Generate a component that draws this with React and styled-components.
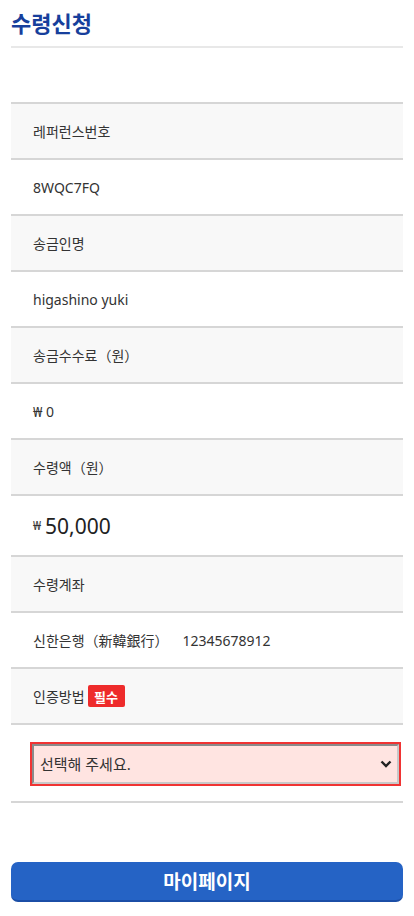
import styled, { createGlobalStyle } from "styled-components";

const GlobalStyle = createGlobalStyle`
  body {
    margin: 0;
    background: #fff;
    font-family: "Noto Sans", "Noto Sans CJK KR", sans-serif;
    color: #333;
  }
`;

const Page = styled.div`
  padding: 0 11px;
`;

const Title = styled.h1`
  margin: 0;
  padding-top: 8px;
  height: 38px;
  font-size: 22px;
  font-weight: 700;
  line-height: 30px;
  color: #173f9c;
  border-bottom: 2px solid #e8e8e8;
  box-sizing: content-box;
`;

const Table = styled.div`
  margin-top: 54px;
  border-top: 2px solid #d6d6d6;
`;

const Row = styled.div`
  display: flex;
  align-items: center;
  height: ${(p) => p.h || 54}px;
  padding-left: 22px;
  background: ${(p) => (p.head ? "#f8f8f8" : "#fff")};
  border-bottom: 2px solid #d6d6d6;
  font-size: 14px;
`;

const Big = styled.span`
  font-size: 21px;
  font-weight: 400;
  color: #222;
`;

const Won = styled.span`
  font-size: 12px;
  margin-right: 4px;
`;

const Gap = styled.span`
  display: inline-block;
  width: 14px;
`;

const Badge = styled.span`
  display: inline-flex;
  align-items: center;
  justify-content: center;
  margin-left: 3px;
  width: 37px;
  height: 22px;
  border-radius: 2px;
  background: #ee2b2b;
  color: #fff;
  font-size: 13px;
  font-weight: 700;
`;

const SelectCell = styled.div`
  padding: 17px 2px 15px 19px;
  border-bottom: 2px solid #d6d6d6;
`;

const SelectFrame = styled.div`
  position: relative;
  border: 2px solid #f03333;
  height: 40px;
`;

const Select = styled.select`
  appearance: none;
  width: 100%;
  height: 100%;
  box-sizing: border-box;
  border: 2px solid;
  border-color: #8a8a8a #c8c8c8 #c8c8c8 #8a8a8a;
  background: #ffe4e1;
  padding: 0 28px 0 6px;
  font-family: inherit;
  font-size: 15px;
  color: #333;
  outline: none;
`;

const Chevron = styled.svg`
  position: absolute;
  right: 7px;
  top: 50%;
  transform: translateY(-50%);
  pointer-events: none;
`;

const Button = styled.button`
  display: block;
  width: 100%;
  height: 40px;
  margin-top: 59px;
  border: none;
  border-bottom: 2px solid #1b4ea6;
  border-radius: 7px;
  background: #2563c5;
  color: #fff;
  font-family: inherit;
  font-size: 19px;
  font-weight: 700;
  cursor: pointer;
`;

export default function App() {
  return (
    <Page>
      <GlobalStyle />
      <Title>수령신청</Title>
      <Table>
        <Row head>레퍼런스번호</Row>
        <Row>8WQC7FQ</Row>
        <Row head>송금인명</Row>
        <Row>higashino yuki</Row>
        <Row head>송금수수료（원）</Row>
        <Row>₩ 0</Row>
        <Row head>수령액（원）</Row>
        <Row h={59}>
          <Won>₩</Won>
          <Big>50,000</Big>
        </Row>
        <Row head>수령계좌</Row>
        <Row>
          신한은행（新韓銀行）<Gap />12345678912
        </Row>
        <Row head>
          인증방법<Badge>필수</Badge>
        </Row>
        <SelectCell>
          <SelectFrame>
            <Select defaultValue="">
              <option value="">선택해 주세요.</option>
            </Select>
            <Chevron width="12" height="8" viewBox="0 0 12 8">
              <path d="M1.5 1.5 6 6l4.5-4.5" fill="none" stroke="#222" strokeWidth="2.4" />
            </Chevron>
          </SelectFrame>
        </SelectCell>
      </Table>
      <Button>마이페이지</Button>
    </Page>
  );
}
